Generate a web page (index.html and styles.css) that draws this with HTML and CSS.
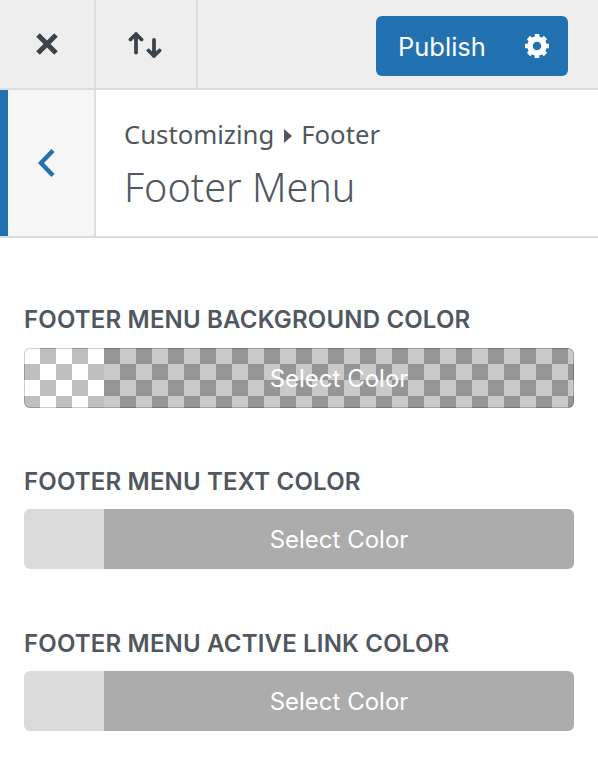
FILE: index.html

```html
<!DOCTYPE html>
<html lang="en">
<head>
  <meta charset="UTF-8">
  <title>Footer Menu</title>
  <link rel="stylesheet" href="styles.css">
</head>
<body>

<header class="topbar">
  <button class="top-btn close-btn" aria-label="Close">
    <svg width="26" height="26" viewBox="0 0 26 26"><path d="M4 4l18 18M22 4L4 22" fill="none" stroke="#3c434a" stroke-width="5"/></svg>
  </button>
  <button class="top-btn arrows-btn" aria-label="Hide or show controls">
    <svg width="36" height="28" viewBox="0 0 36 28"><path d="M8 22.500V4M2.500 9.500L8 4l5.500 5.500M26 10v16M20.500 20.500L26 26l5.500-5.500" fill="none" stroke="#3c434a" stroke-width="3.800" stroke-linecap="round" stroke-linejoin="round"/></svg>
  </button>
  <div class="publish">
    <span class="publish-text">Publish</span>
    <svg class="gear" width="26" height="26" viewBox="0 0 26 26">
      <circle cx="13" cy="13" r="7" fill="none" stroke="#fff" stroke-width="5.500"/>
      <path d="M13 1v5M13 20v5M1 13h5M20 13h5M4.500 4.500l3.500 3.500M18 18l3.500 3.500M21.500 4.500L18 8M8 18l-3.500 3.500" fill="none" stroke="#fff" stroke-width="4.600"/>
    </svg>
  </div>
</header>

<section class="section-head">
  <button class="back-btn" aria-label="Back">
    <svg width="20" height="32" viewBox="0 0 20 32"><path d="M17 3.500L5 16l12 12.500" fill="none" stroke="#2271b1" stroke-width="4.400"/></svg>
  </button>
  <div class="section-title">
    <div class="crumb">Customizing<span class="crumb-arrow"></span>Footer</div>
    <h1>Footer Menu</h1>
  </div>
</section>

<main class="controls">
  <div class="control">
    <h2>Footer Menu Background Color</h2>
    <div class="color-btn checker"><span class="color-label">Select Color</span></div>
  </div>
  <div class="control">
    <h2>Footer Menu Text Color</h2>
    <div class="color-btn"><span class="color-label">Select Color</span></div>
  </div>
  <div class="control">
    <h2>Footer Menu Active Link Color</h2>
    <div class="color-btn"><span class="color-label">Select Color</span></div>
  </div>
</main>

</body>
</html>
```

FILE: styles.css

```css
body {
  margin: 0;
  background: #fff;
  color: #50575e;
  font-family: "Noto Sans", sans-serif;
}
button {
  padding: 0;
  border: none;
  background: none;
}
.topbar {
  display: flex;
  align-items: stretch;
  height: 88px;
  background: #eee;
  border-bottom: 2px solid #ddd;
}
.top-btn {
  display: flex;
  align-items: center;
  justify-content: center;
  border-right: 2px solid #ddd;
}
.close-btn {
  width: 96px;
}
.arrows-btn {
  width: 102px;
}
.publish {
  display: flex;
  align-items: center;
  justify-content: space-between;
  box-sizing: border-box;
  width: 192px;
  height: 60px;
  margin: 16px 30px 0 auto;
  padding: 0 18px 0 22px;
  background: #2271b1;
  border-radius: 6px;
  color: #fff;
}
.publish-text {
  font-family: Inter, sans-serif;
  font-size: 25.500px;
}
.section-head {
  display: flex;
  height: 146px;
  border-bottom: 2px solid #ddd;
}
.back-btn {
  display: flex;
  align-items: center;
  justify-content: center;
  box-sizing: content-box;
  width: 76px;
  padding-right: 10px;
  background: #f6f6f7;
  border-left: 8px solid #2271b1;
  border-right: 2px solid #ddd;
}
.section-title {
  padding: 27px 0 0 28px;
}
.crumb {
  display: flex;
  align-items: center;
  font-size: 25.700px;
  line-height: 36px;
}
.crumb-arrow {
  width: 0;
  height: 0;
  margin: 2px 9px 0 10px;
  border-left: 8px solid #50575e;
  border-top: 7px solid transparent;
  border-bottom: 7px solid transparent;
}
h1 {
  margin: 7px 0 0;
  font-size: 39.600px;
  font-weight: 300;
  line-height: 54px;
}
.controls {
  display: flex;
  flex-direction: column;
  gap: 59.200px;
  padding: 67.400px 24px 0;
}
h2 {
  margin: 0 0 12.400px;
  font-family: Inter, sans-serif;
  font-size: 24px;
  font-weight: 600;
  letter-spacing: .18px;
  line-height: 30px;
  text-transform: uppercase;
}
.color-btn {
  display: flex;
  height: 60px;
  background: #dbdbdb;
  border-radius: 6px;
  overflow: hidden;
}
.checker {
  background: repeating-conic-gradient(#bfbfbf 0 25%, #fff 0 50%) 0 0 / 32px 32px;
  box-shadow: inset 0 0 0 1px rgba(0, 0, 0, .2);
}
.color-label {
  flex: 1;
  margin-left: 80px;
  background: rgba(0, 0, 0, .21);
  color: #fff;
  font-family: Inter, sans-serif;
  font-size: 24px;
  line-height: 62px;
  text-align: center;
}
```
